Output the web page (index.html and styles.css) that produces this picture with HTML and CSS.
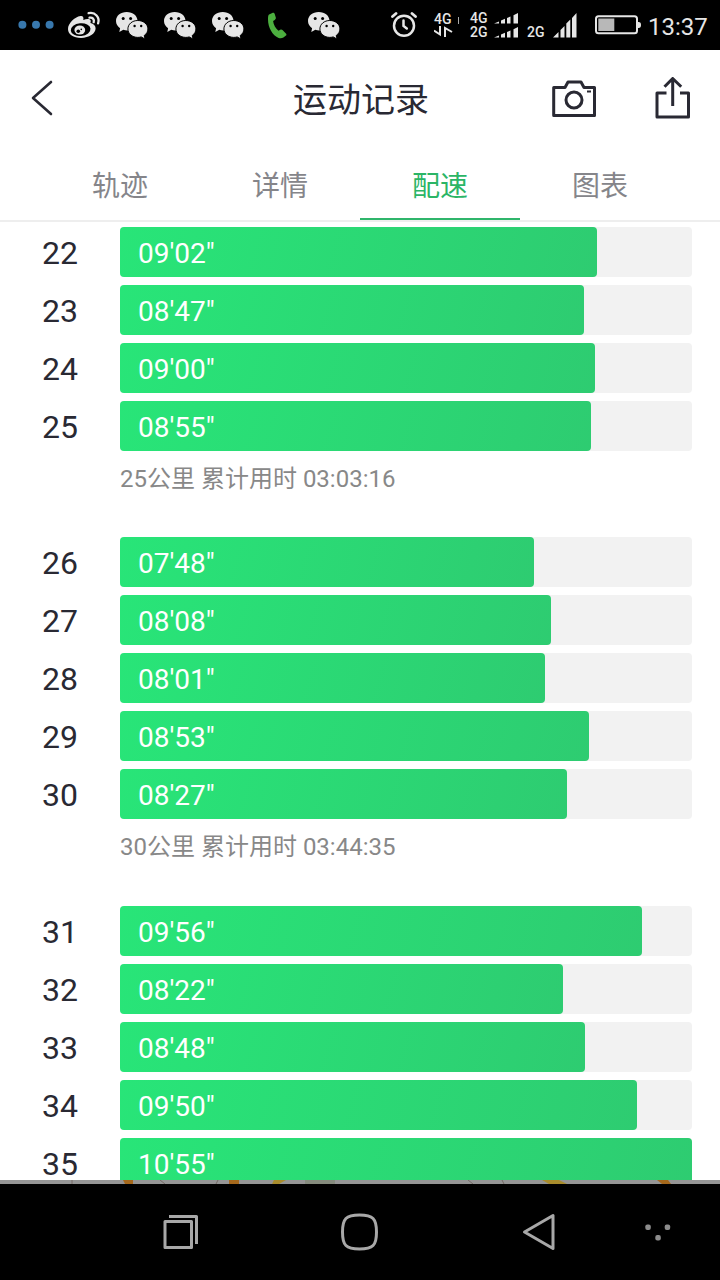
FILE: index.html
```html
<!DOCTYPE html>
<html lang="zh-CN">
<head>
  <meta charset="UTF-8">
  <meta name="viewport" content="width=device-width, initial-scale=1">
  <title>运动记录</title>
  <link rel="stylesheet" href="styles.css">
</head>
<body>

  <svg width="0" height="0" class="defs">
    <symbol id="wechat" viewBox="0 0 48 50">
      <path d="M18.700 12C12.500 12 8 15.800 8 21c0 3 1.600 5.500 4.100 7.200L11.300 32l4-2.200c1.200.4 2.700.6 4 .6C25 30.200 29.500 26.200 29.500 21S25 12 18.700 12z" fill="#e6e6e6"/>
      <path d="M29.800 20.500c-5.600 0-9.900 3.700-9.900 8.400s4.300 8.500 9.900 8.500c1.200 0 2.300-.2 3.400-.5l3.900 2.200-.9-3.600c2.300-1.500 3.700-3.900 3.700-6.600 0-4.700-4.500-8.400-10.100-8.400z" fill="#e6e6e6" stroke="#000" stroke-width="1"/>
      <g fill="#000"><circle cx="15.200" cy="18.500" r="1.500"/><circle cx="22.600" cy="18.500" r="1.500"/><circle cx="26.600" cy="26" r="1.200"/><circle cx="33.200" cy="26" r="1.200"/></g>
    </symbol>
  </svg>

  <div class="status-bar">
    <div class="notices">
      <svg viewBox="0 0 48 50"><g fill="#3878ad"><circle cx="10.400" cy="24.700" r="4"/><circle cx="24" cy="24.700" r="4"/><circle cx="37.600" cy="24.700" r="4"/></g></svg>
      <svg viewBox="0 0 48 50">
        <path d="M20.500 16c2-.4 3.500.6 2.800 4 3.500-1.600 7.500-1.500 7.500 1 0 .9-.4 1.400-.4 2 3.300.9 5.200 2.600 5.200 5.300 0 5.500-6.500 9.600-14.500 9.600-7.600 0-13.100-3.500-13.100-9 0-5.400 6.500-12 12.500-12.900z" fill="#e6e6e6"/>
        <ellipse cx="20.700" cy="29.600" rx="9.900" ry="6.400" fill="#000" transform="rotate(-6 21 30)"/>
        <ellipse cx="19.800" cy="30" rx="5.400" ry="4.600" fill="#e6e6e6"/>
        <circle cx="18.300" cy="31.200" r="1.800" fill="#000"/><circle cx="21.300" cy="29.400" r=".8" fill="#000"/>
        <path d="M29.500 17.700c3-.6 5 1.600 4.200 4.500M28.600 13.200c6.500-1.500 11.500 4 9.500 10.200" fill="none" stroke="#e6e6e6" stroke-width="2.300" stroke-linecap="round"/>
      </svg>
      <svg><use href="#wechat"/></svg>
      <svg><use href="#wechat"/></svg>
      <svg><use href="#wechat"/></svg>
      <svg viewBox="0 0 48 50"><path d="M17 14.500l3.300-1.500c1.200-.4 2.100.1 2.400 1.100l1.100 3.500c.3 1-.2 1.800-1 2.300l-1.700 1c.4 3.800 2.500 7.400 5.400 9.800l1.800-1c.8-.4 1.600-.3 2.200.4l3.400 3.300c.7.700.7 1.500.1 2.200-2.200 2.200-4.700 3.200-7.300 2.300C20.500 35.500 16 27.500 16 19.500c0-2 .1-4.300 1-5z" fill="#4caf3f"/></svg>
      <svg><use href="#wechat"/></svg>
    </div>
    <div class="system">
      <svg class="alarm" width="26" height="26" viewBox="0 0 26 26" fill="none" stroke="#e6e6e6" stroke-linecap="round">
        <circle cx="13" cy="13.700" r="10" stroke-width="2.500"/><path d="M12.500 8.500v5.500l3.300 2.500" stroke-width="2.500"/><path d="M1.500 4.500L5 1.500M21 1.500l3.500 3" stroke-width="2.800"/>
      </svg>
      <div class="net net-4g">
        <span>4G<i></i></span>
        <svg width="26" height="12" viewBox="0 0 26 12" fill="none" stroke="#e6e6e6" stroke-width="2"><path d="M0 4.500l6 4V0M11 11V2l7 4"/></svg>
      </div>
      <div class="net"><span>4G</span><span>2G</span></div>
      <svg class="bars-small" width="25" height="25" viewBox="0 0 25 25" fill="#e6e6e6">
        <path d="M0 10.500l5-2v2zM7 7.500l4-1.700v4.700H7zM13 5l3.500-1.500v7H13zM19.500 2.300L24 0v10.500h-4.500zM0 24.500l5-2v2zM7 21.500l4-1.700v4.700H7zM13 19l3.500-1.500v7H13zM19.500 16.300L24 14v10.500h-4.500z"/>
      </svg>
      <div class="net net-2g"><span>2G</span></div>
      <svg class="bars" width="24" height="25" viewBox="0 0 24 25" fill="#e6e6e6"><path d="M0 24.500L5.500 19v5.500zM7.500 17l4-4v11.500h-4zM13.300 10.500l4-4v18h-4zM19 5l4.500-5v24.500H19z"/></svg>
      <svg class="battery" width="46" height="20" viewBox="0 0 46 20"><rect x="1" y="1.300" width="41" height="17" rx="2.500" fill="none" stroke="#e6e6e6" stroke-width="2"/><path d="M3.300 3.500h16v12.500h-16z" fill="#b8b8b8"/><path d="M43 7q3-.5 3 3t-3 3z" fill="#e6e6e6"/></svg>
      <span class="clock">13:37</span>
    </div>
  </div>

  <header class="header">
    <svg class="back" width="24" height="36" viewBox="0 0 24 36"><path d="M20 2L2 18 20 34" fill="none" stroke="#292933" stroke-width="2.600" stroke-linecap="round" stroke-linejoin="round"/></svg>
    <h1>运动记录</h1>
    <div class="actions">
      <svg width="44" height="38" viewBox="0 0 44 38" fill="none" stroke="#292933" stroke-width="3" stroke-linejoin="round"><path d="M1.700 8.500H13l3-5.500h13l3 5.500h10.500v28H1.700z"/><circle cx="22" cy="21" r="8"/><path d="M35 12.500h4" stroke-width="2"/></svg>
      <svg width="36" height="42" viewBox="0 0 36 42" fill="none" stroke="#292933" stroke-width="3" stroke-linejoin="round"><path d="M11.500 16H2v24h31.500V16H25M17.700 29V1.500M9.500 9.800l8.200-8.300 8.500 8.300"/></svg>
    </div>
  </header>

  <nav class="tabs">
    <span>轨迹</span>
    <span>详情</span>
    <span class="active">配速</span>
    <span>图表</span>
  </nav>

  <main class="pace-list">
    <section>
      <div class="row"><b>22</b><div class="track"><div class="bar" style="width: 477px">09'02"</div></div></div>
      <div class="row"><b>23</b><div class="track"><div class="bar" style="width: 464px">08'47"</div></div></div>
      <div class="row"><b>24</b><div class="track"><div class="bar" style="width: 475px">09'00"</div></div></div>
      <div class="row"><b>25</b><div class="track"><div class="bar" style="width: 471px">08'55"</div></div></div>
      <p>25公里 累计用时 03:03:16</p>
    </section>
    <section>
      <div class="row"><b>26</b><div class="track"><div class="bar" style="width: 414px">07'48"</div></div></div>
      <div class="row"><b>27</b><div class="track"><div class="bar" style="width: 431px">08'08"</div></div></div>
      <div class="row"><b>28</b><div class="track"><div class="bar" style="width: 425px">08'01"</div></div></div>
      <div class="row"><b>29</b><div class="track"><div class="bar" style="width: 469px">08'53"</div></div></div>
      <div class="row"><b>30</b><div class="track"><div class="bar" style="width: 447px">08'27"</div></div></div>
      <p>30公里 累计用时 03:44:35</p>
    </section>
    <section>
      <div class="row"><b>31</b><div class="track"><div class="bar" style="width: 522px">09'56"</div></div></div>
      <div class="row"><b>32</b><div class="track"><div class="bar" style="width: 443px">08'22"</div></div></div>
      <div class="row"><b>33</b><div class="track"><div class="bar" style="width: 465px">08'48"</div></div></div>
      <div class="row"><b>34</b><div class="track"><div class="bar" style="width: 517px">09'50"</div></div></div>
      <div class="row"><b>35</b><div class="track"><div class="bar" style="width: 572px">10'55"</div></div></div>
    </section>
  </main>

  <!-- sliver of the map under the list -->
  <svg class="map-edge" width="720" height="4" viewBox="0 0 720 4">
    <path d="M123 0h10v4h-8zM229 0h10v4h-10zM657 0h11l3 4h-9z" fill="#a5681c"/>
    <path d="M274 0h12l-7 4h-7zM542 0h17l8 4h-18z" fill="#a88c2c"/>
    <path d="M305 0h30v4h-30z" fill="#858b7d"/>
    <path d="M160 0l5 4M218 0l-2 4M468 0l5 4M502 0l2 4M72 0v4" stroke="#766b66" fill="none"/>
  </svg>

  <footer class="nav-bar">
    <svg width="720" height="96" viewBox="0 0 720 96" fill="none" stroke="#a8a8a8" stroke-width="3" stroke-linejoin="round">
      <path d="M165 37.500h26.500v26H165zM169 32.500h27.500V60"/>
      <path d="M359.500 31c13.500 0 17 3.500 17 17s-3.500 17-17 17-17-3.500-17-17 3.500-17 17-17z"/>
      <path d="M524.500 48L553 31.500v33z"/>
      <g fill="#8c8c8c" stroke="none"><rect x="645.300" y="40.500" width="5.500" height="5.500" rx="2"/><rect x="664.700" y="40.500" width="5.500" height="5.500" rx="2"/><rect x="655.300" y="51" width="5.500" height="5.500" rx="2"/></g>
    </svg>
  </footer>

</body>
</html>
```
FILE: styles.css
```css
* {
  box-sizing: border-box;
}
body {
  margin: 0;
  width: 720px;
  height: 1280px;
  overflow: hidden;
  display: flex;
  flex-direction: column;
  background: #fff;
  color: #292933;
  font-family: Roboto, "Noto Sans CJK SC", sans-serif;
}
svg {
  display: block;
  flex: none;
}
.defs {
  position: absolute;
}
.status-bar {
  flex: none;
  height: 50px;
  background: #000;
  color: #e6e6e6;
  display: flex;
  justify-content: space-between;
  padding: 0 12px;
}
.notices {
  display: flex;
}
.notices svg {
  width: 48px;
  height: 50px;
}
.system {
  display: flex;
  align-items: center;
}
.net {
  display: flex;
  flex-direction: column;
  width: 20px;
  font-size: 14px;
  font-weight: 500;
  line-height: 14px;
}
.net-4g {
  width: 26px;
  margin: 0 10px 0 17px;
}
.net-4g i {
  display: inline-block;
  width: 1px;
  height: 7px;
  margin-left: 6px;
  background: #aaa;
}
.net-2g {
  margin: 14px 6px 0 8px;
}
.bars-small {
  margin-left: 4px;
}
.battery {
  margin: 0 7px 0 18px;
}
.clock {
  width: 60px;
  font-size: 24px;
  padding-top: 3px;
}
.header {
  flex: none;
  height: 100px;
  display: grid;
  grid-template-columns: 1fr auto 1fr;
  align-items: center;
  padding: 0 29px 4px 31px;
}
.header h1 {
  margin: 0;
  font-size: 34px;
  font-weight: 400;
  line-height: 50px;
  padding-top: 4px;
}
.actions {
  display: flex;
  justify-content: flex-end;
  align-items: center;
  gap: 59px;
}
.tabs {
  flex: none;
  height: 72px;
  display: flex;
  padding: 0 40px;
  border-bottom: 2px solid #eee;
  color: #85858a;
  font-size: 28px;
  line-height: 74px;
  text-align: center;
}
.tabs span {
  width: 160px;
  height: 70px;
}
.tabs .active {
  color: #2bb566;
  border-bottom: 2px solid #2fb56b;
}
.pace-list {
  flex: none;
  height: 958px;
  overflow: hidden;
  padding-top: 4.500px;
}
.row {
  display: flex;
  align-items: center;
  height: 50px;
  margin-bottom: 8px;
}
.row b {
  width: 120px;
  text-align: center;
  font-size: 32px;
  font-weight: 400;
  line-height: 28px;
  padding-top: 2px;
}
.track {
  width: 572px;
  background: #f2f2f2;
  border-radius: 4px;
}
.bar {
  height: 50px;
  padding-left: 18px;
  border-radius: 4px;
  background: linear-gradient(105deg, #28e578, #2ecc71);
  color: #fff;
  font-size: 28px;
  line-height: 53px;
}
.pace-list p {
  margin: 0 0 0 120px;
  height: 78.500px;
  color: #888;
  font-size: 24px;
  line-height: 41px;
}
.map-edge {
  background: #959595;
}
.nav-bar {
  flex: none;
  height: 96px;
  background: #000;
}
```
